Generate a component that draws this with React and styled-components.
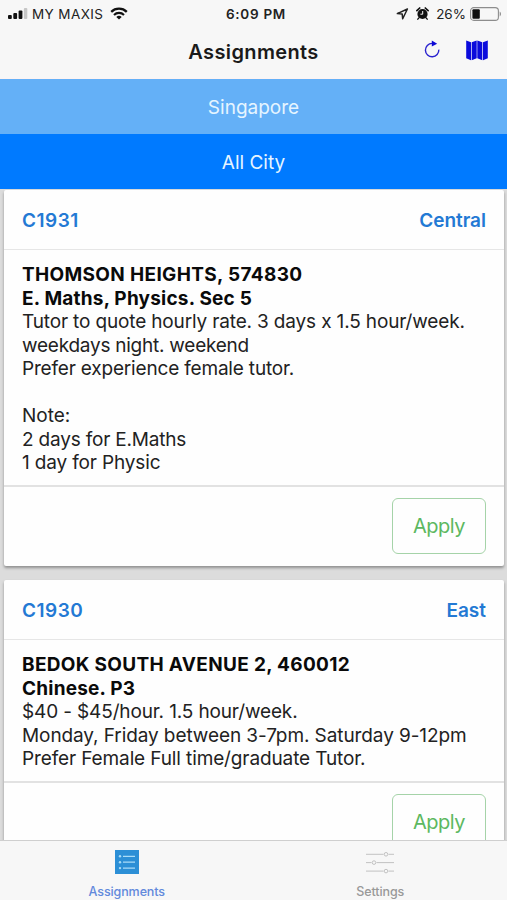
import React from "react";
import styled, { createGlobalStyle } from "styled-components";

const assignments = [
  {
    code: "C1931",
    area: "Central",
    title: [
      { text: "THOMSON HEIGHTS, 574830", spacing: 0.34 },
      { text: "E. Maths, Physics. Sec 5", spacing: 0.21 },
    ],
    details: [
      { text: "Tutor to quote hourly rate. 3 days x 1.5 hour/week.", spacing: -0.15 },
      { text: "weekdays night. weekend", spacing: -0.24 },
      { text: "Prefer experience female tutor.", spacing: -0.18 },
      { text: "" },
      { text: "Note:" },
      { text: "2 days for E.Maths", spacing: -0.19 },
      { text: "1 day for Physic", spacing: -0.15 },
    ],
  },
  {
    code: "C1930",
    area: "East",
    title: [
      { text: "BEDOK SOUTH AVENUE 2, 460012", spacing: 0.32 },
      { text: "Chinese. P3", spacing: 0.2 },
    ],
    details: [
      { text: "$40 - $45/hour. 1.5 hour/week.", spacing: -0.14 },
      { text: "Monday, Friday between 3-7pm. Saturday 9-12pm", spacing: -0.09 },
      { text: "Prefer Female Full time/graduate Tutor.", spacing: -0.12 },
    ],
  },
];

const SignalIcon = () => (
  <svg width="20" height="12" viewBox="0 0 20 12">
    <rect x="0" y="7" width="3.8" height="4" rx="1" fill="#111" />
    <rect x="5.3" y="5" width="3.8" height="6" rx="1" fill="#111" />
    <rect x="10.6" y="2.5" width="3.8" height="8.5" rx="1" fill="#111" />
    <rect x="15.9" y="0" width="3.4" height="11" rx="1" fill="#c6c6c6" />
  </svg>
);

const WifiIcon = () => (
  <svg width="18" height="13" viewBox="0 0 18 13" fill="none" stroke="#111">
    <path d="M1.2 4.8a11.2 11.2 0 0 1 15.6 0" strokeWidth="2.3" />
    <path d="M4 7.9a7.2 7.2 0 0 1 10 0" strokeWidth="2.1" />
    <path d="M6.3 10 9 12.6 11.7 10a4 4 0 0 0-5.4 0Z" fill="#111" stroke="none" />
  </svg>
);

const LocationIcon = () => (
  <svg width="13" height="12" viewBox="0 0 13 12">
    <path
      d="M11.4 1 1.3 5.6l4.9.5.5 4.7Z"
      fill="none"
      stroke="#222"
      strokeWidth="1.5"
      strokeLinejoin="round"
    />
  </svg>
);

const AlarmIcon = () => (
  <svg width="13" height="13" viewBox="0 0 13 13">
    <circle cx="6.5" cy="7" r="5.1" fill="#111" />
    <path d="M.9 3.6 3.7 1M12.1 3.6 9.3 1" stroke="#111" strokeWidth="1.7" strokeLinecap="round" />
    <path d="m2.8 11-1 1.2M10.2 11l1 1.2" stroke="#111" strokeWidth="1.3" strokeLinecap="round" />
    <path d="M6.7 4v3.2H4.4" fill="none" stroke="#f7f7f7" strokeWidth="1" />
  </svg>
);

const BatteryIcon = () => (
  <svg width="32" height="14" viewBox="0 0 32 14">
    <rect x=".6" y=".6" width="27.8" height="12.8" rx="3.2" fill="none" stroke="#8d8d8d" strokeWidth="1.1" />
    <rect x="2.4" y="2.3" width="7.4" height="9.4" rx="1" fill="#111" />
    <path d="M29.7 4.6c1.7.7 1.7 4.1 0 4.8Z" fill="#8d8d8d" />
  </svg>
);

const RefreshIcon = () => (
  <svg width="16" height="18" viewBox="0 0 16 18">
    <path d="M14.8 9.6A6.7 6.7 0 1 1 8.1 3.4H9" fill="none" stroke="#2a22cf" strokeWidth="1.4" />
    <path d="M7.8.4 13.2 3.7 7.8 6.6Z" fill="#0d09d6" />
  </svg>
);

const MapIcon = () => (
  <svg width="22" height="21" viewBox="0 0 22 21" fill="#0b0bdc">
    <path d="M.2.4 5 2.2v18L.2 18.2Z" />
    <path d="M5.7 2.2 10.7.4v17.8l-5 2Z" />
    <path d="m11.3.4 5 1.8v18l-5-2Z" />
    <path d="M17 2.2 21.8.4v17.8L17 20.2Z" />
  </svg>
);

const ListIcon = () => (
  <svg width="24" height="24" viewBox="0 0 24 24">
    <path d="M0 0h24v24H0Z" fill="#2c8fd6" />
    <path d="M8 6.3h12M8 12.2h12M8 18.1h12" stroke="#a9dcf7" strokeWidth="1.3" />
    <g fill="#a9dcf7">
      <circle cx="5" cy="6.3" r="1.2" />
      <circle cx="5" cy="12.2" r="1.2" />
      <circle cx="5" cy="18.1" r="1.2" />
    </g>
  </svg>
);

const SlidersIcon = () => (
  <svg width="30" height="24" viewBox="0 0 30 24" fill="none" stroke="#c2c2c2" strokeWidth="1">
    <path d="M1 4.3h17.5M23.5 4.3H29M1 12.6h5.5M11.5 12.6H29M1 21.1h17.5M23.5 21.1H29" />
    <circle cx="21" cy="4.3" r="1.8" />
    <circle cx="9" cy="12.6" r="1.8" />
    <circle cx="21" cy="21.1" r="1.8" />
  </svg>
);

const AssignmentCard = ({ code, area, title, details }) => (
  <Card>
    <CardHeader>
      <Code>{code}</Code>
      <span>{area}</span>
    </CardHeader>
    <CardBody>
      {title.map((line, i) => (
        <Line key={i} $bold $spacing={line.spacing}>
          {line.text}
        </Line>
      ))}
      {details.map((line, i) => (
        <Line key={i} $spacing={line.spacing}>
          {line.text}
        </Line>
      ))}
    </CardBody>
    <CardFooter>
      <ApplyButton>Apply</ApplyButton>
    </CardFooter>
  </Card>
);

const App = () => {
  return (
    <Screen>
      <GlobalStyle />
      <StatusBar>
        <Carrier>
          <SignalIcon />
          <span>MY MAXIS</span>
          <WifiIcon />
        </Carrier>
        <Time>6:09 PM</Time>
        <Indicators>
          <LocationIcon />
          <AlarmIcon />
          <span>26%</span>
          <BatteryIcon />
        </Indicators>
      </StatusBar>
      <NavBar>
        <Heading>Assignments</Heading>
        <Actions>
          <RefreshIcon />
          <MapIcon />
        </Actions>
      </NavBar>
      <Filter $color="#64b0f7">Singapore</Filter>
      <Filter $color="#007aff">All City</Filter>
      <Feed>
        {assignments.map((item) => (
          <AssignmentCard key={item.code} {...item} />
        ))}
      </Feed>
      <TabBar>
        <Tab $color="#6289dc">
          <ListIcon />
          <span>Assignments</span>
        </Tab>
        <Tab $color="#999999">
          <SlidersIcon />
          <span>Settings</span>
        </Tab>
      </TabBar>
    </Screen>
  );
};

const GlobalStyle = createGlobalStyle`
  * {
    box-sizing: border-box;
  }
  body {
    margin: 0;
    font-family: Inter, "Liberation Sans", sans-serif;
  }
  svg {
    display: block;
    flex-shrink: 0;
  }
`;

const Screen = styled.div`
  width: 507px;
  height: 900px;
  display: flex;
  flex-direction: column;
  overflow: hidden;
  background: #dcdcdc;
`;

const StatusBar = styled.div`
  height: 27px;
  flex-shrink: 0;
  display: grid;
  grid-template-columns: 1fr auto 1fr;
  align-items: center;
  padding: 0 5px 0 8px;
  background: #f7f7f7;
  color: #222;
  font-size: 13.5px;
`;

const Carrier = styled.div`
  display: flex;
  align-items: center;
  gap: 4px;
  letter-spacing: 0.4px;

  svg:last-child {
    margin-left: 3px;
  }
`;

const Time = styled.div`
  font-weight: 600;
  font-size: 13.5px;
  letter-spacing: 0.7px;
  padding-left: 2px;
`;

const Indicators = styled.div`
  display: flex;
  align-items: center;
  justify-content: flex-end;
  gap: 7px;

  svg:last-child {
    margin-left: -3px;
  }
`;

const NavBar = styled.header`
  height: 52px;
  flex-shrink: 0;
  display: grid;
  grid-template-columns: 1fr auto 1fr;
  align-items: center;
  padding: 0 19px 2px;
  background: #f7f7f7;
  border-bottom: 1px solid #fdf3f3;
`;

const Heading = styled.h1`
  grid-column: 2;
  margin: 0;
  font-size: 20px;
  font-weight: 600;
  letter-spacing: 0.36px;
  color: #1a1a1a;
`;

const Actions = styled.div`
  display: flex;
  align-items: flex-start;
  justify-content: flex-end;
  gap: 26px;
  padding-bottom: 2px;
`;

const Filter = styled.div`
  height: 55px;
  flex-shrink: 0;
  display: flex;
  align-items: center;
  justify-content: center;
  padding-top: 2px;
  background: ${(props) => props.$color};
  color: #e6f5ff;
  font-size: 19px;
`;

const Feed = styled.main`
  flex: 1;
  min-height: 0;
  overflow: hidden;
  display: flex;
  flex-direction: column;
  gap: 14.7px;
  padding: 1px 3px 0 4px;
`;

const Card = styled.article`
  flex-shrink: 0;
  background: #fefefe;
  border-radius: 2px;
  box-shadow: 0 2px 3px rgba(0, 0, 0, 0.35);
`;

const CardHeader = styled.div`
  height: 60px;
  display: flex;
  align-items: center;
  justify-content: space-between;
  padding: 1px 18px 0;
  border-bottom: 1px solid #e6e6e6;
  color: #2379d4;
  font-size: 19px;
  font-weight: 600;
`;

const Code = styled.span`
  letter-spacing: 0.5px;
`;

const CardBody = styled.div`
  padding: 13px 18px 10px;
  border-bottom: 2px solid #e2e2e2;
`;

const Line = styled.div`
  height: 23.52px;
  line-height: 23.52px;
  font-size: 19px;
  font-weight: ${(props) => (props.$bold ? 700 : 400)};
  color: ${(props) => (props.$bold ? "#0a0a0a" : "#222")};
  letter-spacing: ${(props) => props.$spacing || 0}px;
  white-space: nowrap;
`;

const CardFooter = styled.div`
  height: 79px;
  display: flex;
  align-items: center;
  justify-content: flex-end;
  padding: 0 18px;
`;

const ApplyButton = styled.button`
  width: 94px;
  height: 56px;
  padding: 0;
  background: transparent;
  border: 1.5px solid #a5d3a8;
  border-radius: 6px;
  color: #5cb860;
  font-family: inherit;
  font-size: 20px;
  letter-spacing: -0.5px;
`;

const TabBar = styled.nav`
  height: 60px;
  flex-shrink: 0;
  display: grid;
  grid-template-columns: 1fr 1fr;
  background: #f7f7f7;
  border-top: 1px solid #cfcfcf;
`;

const Tab = styled.div`
  display: flex;
  flex-direction: column;
  align-items: center;
  justify-content: space-between;
  padding: 9px 0 1px;
  color: ${(props) => props.$color};
  font-size: 12.5px;
  font-weight: 500;
  letter-spacing: -0.1px;
`;

export default App;
